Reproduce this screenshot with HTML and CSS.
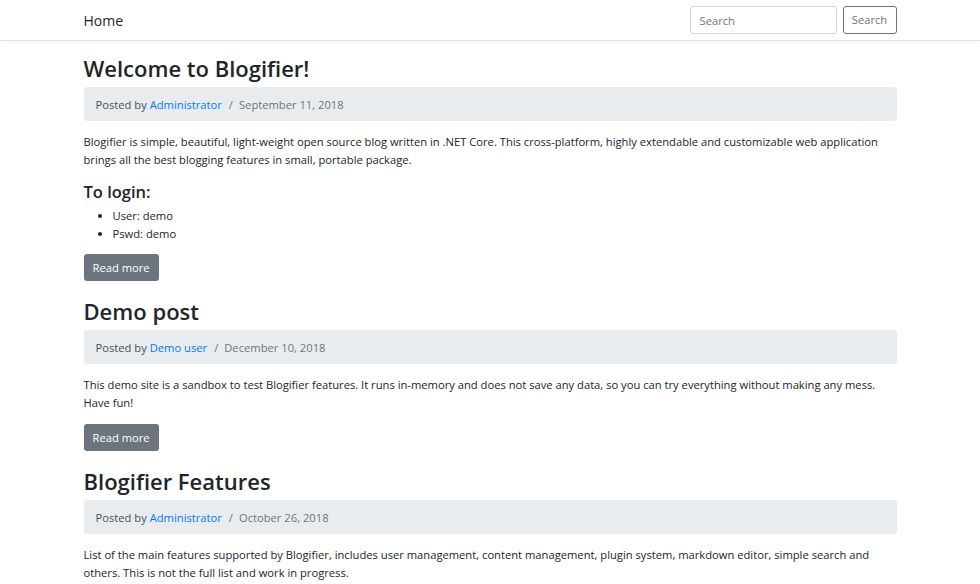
FILE: index.html
```html
<!DOCTYPE html>
<html lang="en">
<head>
<meta charset="utf-8">
<title>Blogifier</title>
<link rel="stylesheet" href="styles.css">
</head>
<body>
<header class="navbar">
  <div class="container nav-inner">
    <a class="brand" href="#">Home</a>
    <form class="search">
      <input class="search-input" type="text" placeholder="Search">
      <button class="search-btn" type="button">Search</button>
    </form>
  </div>
</header>
<main class="container">
  <article class="post">
    <h2 class="post-title">Welcome to Blogifier!</h2>
    <div class="meta">Posted by <a href="#">Administrator</a><span class="sep">/</span><span class="date">September 11, 2018</span></div>
    <p class="text">Blogifier is simple, beautiful, light-weight open source blog written in .NET Core. This cross-platform, highly extendable and customizable web application brings all the best blogging features in small, portable package.</p>
    <h4 class="sub">To login:</h4>
    <ul class="list">
      <li>User: demo</li>
      <li>Pswd: demo</li>
    </ul>
    <a class="btn btn-after-list" href="#">Read more</a>
  </article>
  <article class="post">
    <h2 class="post-title">Demo post</h2>
    <div class="meta">Posted by <a href="#">Demo user</a><span class="sep">/</span><span class="date">December 10, 2018</span></div>
    <p class="text">This demo site is a sandbox to test Blogifier features. It runs in-memory and does not save any data, so you can try everything without making any mess. Have fun!</p>
    <a class="btn" href="#">Read more</a>
  </article>
  <article class="post">
    <h2 class="post-title">Blogifier Features</h2>
    <div class="meta">Posted by <a href="#">Administrator</a><span class="sep">/</span><span class="date">October 26, 2018</span></div>
    <p class="text">List of the main features supported by Blogifier, includes user management, content management, plugin system, markdown editor, simple search and others. This is not the full list and work in progress.</p>
  </article>
</main>
</body>
</html>
```
FILE: styles.css
```css
* { box-sizing: border-box; }
html, body { margin: 0; padding: 0; }
body {
  font-family: "Open Sans", "Noto Sans", "Liberation Sans", sans-serif;
  font-size: 11.2px;
  line-height: 18px;
  color: #212529;
  background: #fff;
}
.container {
  width: 813px;
  margin: 0 auto;
}
.navbar {
  height: 41px;
  border-bottom: 1px solid #e3e3e3;
  box-shadow: 0 1px 4px rgba(0,0,0,0.06);
  background: #fff;
}
.nav-inner {
  height: 40px;
  display: flex;
  align-items: center;
  justify-content: space-between;
}
.brand {
  font-size: 14px;
  color: #212529;
  text-decoration: none;
  padding-top: 1px;
}
.search {
  display: flex;
  gap: 6px;
  margin: 0;
}
.search-input {
  width: 147px;
  height: 28px;
  border: 1px solid #ced4da;
  border-radius: 3px;
  padding: 0 9px;
  font: inherit;
  font-size: 11.2px;
  color: #495057;
}
.search-input::placeholder { color: #6c757d; }
.search-btn {
  height: 28px;
  width: 54px;
  border: 1px solid #6c757d;
  border-radius: 3px;
  background: #fff;
  color: #6c757d;
  font: inherit;
  font-size: 11.2px;
  padding: 0;
}
.post-title {
  font-size: 22px;
  line-height: 31px;
  font-weight: 600;
  margin: 12px 0 3px;
}
.post + .post .post-title { margin-top: 15px; }
.meta {
  background: #e9ecef;
  border-radius: 3px;
  height: 34px;
  line-height: 33px;
  padding: 1px 12px 0;
  color: #495057;
}
.meta a {
  color: #007bff;
  text-decoration: none;
}
.sep {
  color: #6c757d;
  padding: 0 6px 0 7px;
}
.date { color: #6c757d; }
.text { margin: 12px 0 0; }
.sub {
  font-size: 16.5px;
  line-height: 22px;
  font-weight: 600;
  margin: 12px 0 4px;
}
.list {
  margin: 0;
  padding-left: 29px;
}
.btn {
  display: inline-block;
  margin-top: 12px;
  height: 27px;
  line-height: 27px;
  padding: 0 9px;
  background: #6c757d;
  color: #fff;
  border-radius: 3px;
  text-decoration: none;
}
.btn-after-list { margin-top: 11px; }
```
